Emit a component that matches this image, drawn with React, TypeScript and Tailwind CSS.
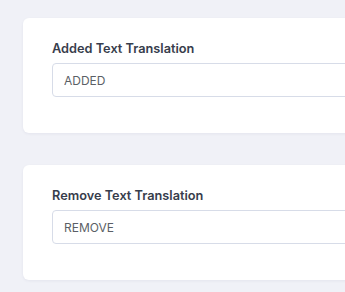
export default function App() {
  const fields = [
    { label: "Added Text Translation", value: "ADDED" },
    { label: "Remove Text Translation", value: "REMOVE" },
  ];

  return (
    <div className="h-[292px] w-[345px] overflow-hidden bg-[#f0f1f7] pt-[18px] font-['Inter',sans-serif]">
      <div className="flex w-[420px] flex-col gap-[32px] pl-[23px]">
        {fields.map((f) => (
          <div
            key={f.label}
            className="h-[115px] rounded-[6px] bg-white px-[29px] pt-[22px] shadow-[0_1px_3px_rgba(30,40,80,0.06)]"
          >
            <label className="mb-[5px] block text-[12.75px] font-semibold leading-[18px] text-[#373d4c]">
              {f.label}
            </label>
            <input
              readOnly
              value={f.value}
              className="block h-[34px] w-full rounded-[4px] border border-[#d7dce8] bg-white px-[11px] text-[12px] text-[#5b5f66] outline-none"
            />
          </div>
        ))}
      </div>
    </div>
  );
}
